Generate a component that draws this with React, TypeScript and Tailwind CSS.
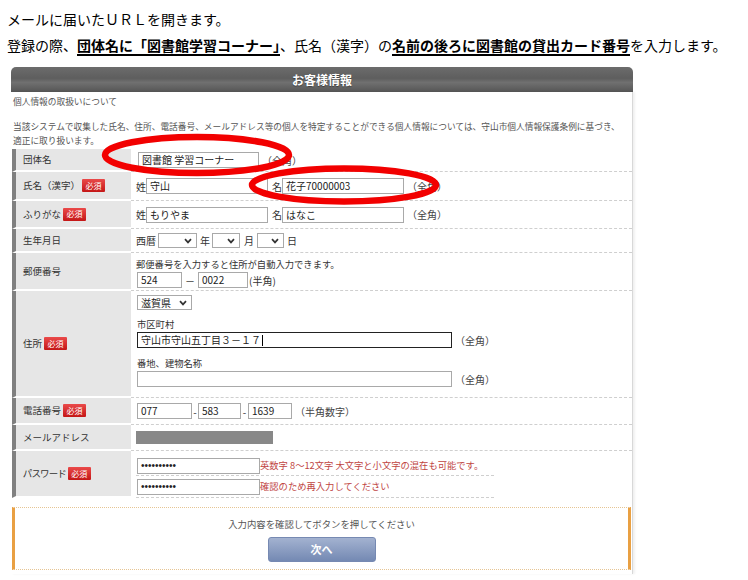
import React from 'react';

type Kids = { children?: React.ReactNode };

const Badge: React.FC = () => (
  <span className="ml-[2px] inline-flex h-[13px] w-[23px] items-center justify-center rounded-[1px] bg-[linear-gradient(#ea4a4a,#c41616)] text-[8px] leading-none text-white">
    必須
  </span>
);

const Field: React.FC<{ className?: string; value?: string; focus?: boolean }> = ({ className = '', value = '', focus }) => (
  <div
    className={`flex h-[16px] shrink-0 items-center bg-white px-[3px] text-[10px] leading-none text-[#222] ${
      focus ? 'border border-[#222]' : 'border border-[#a9a9a9]'
    } ${className}`}
  >
    {value}
    {focus && <span className="ml-[1px] h-[11px] w-px bg-black" />}
  </div>
);

const Select: React.FC<{ className?: string; value?: string }> = ({ className = '', value = '' }) => (
  <div className={`flex h-[15px] shrink-0 items-center justify-between border border-[#a9a9a9] bg-white pl-[3px] pr-[4px] text-[10px] leading-none text-[#222] ${className}`}>
    <span>{value}</span>
    <svg width="8" height="6" viewBox="0 0 8 6">
      <path d="M1 1.2 L4 4.4 L7 1.2" fill="none" stroke="#333" strokeWidth="1.7" />
    </svg>
  </div>
);

const Row: React.FC<Kids & { label: string; req?: boolean; h: string; last?: boolean; col?: boolean; narrow?: boolean }> = ({
  label,
  req,
  h,
  last,
  col,
  narrow,
  children,
}) => (
  <div className={`grid grid-cols-[119px_1fr] ${h}`}>
    <div
      className={`flex items-center border-b-2 border-l-4 border-b-white border-l-[#808080] bg-[#e6e6e6] pl-[7px] text-[9.5px] text-[#333] ${
        narrow ? "[font-feature-settings:'palt']" : ''
      }`}
    >
      {label}
      {req && <Badge />}
    </div>
    <div
      className={`flex pl-[5px] text-[10px] text-[#333] ${col ? 'flex-col items-start' : 'items-center'} ${
        last ? '' : 'border-b border-dashed border-[#cfcfcf]'
      }`}
    >
      {children}
    </div>
  </div>
);

const Zen: React.FC<{ className?: string }> = ({ className = '' }) => (
  <span className={`text-[10px] text-[#444] ${className}`}>（全角）</span>
);

export default function App() {
  return (
    <div className="relative h-[580px] w-[748px] overflow-hidden bg-white font-['Noto_Sans_CJK_JP','Noto_Sans',sans-serif] text-black">
      <div className="pl-[7px] pt-[6px] text-[14px] leading-[26px]">
        <p>メールに届いたＵＲＬを開きます。</p>
        <p className="whitespace-nowrap">
          登録の際、
          <b className="underline decoration-[1.5px] underline-offset-[3px]">団体名に「図書館学習コーナー」</b>
          、氏名（漢字）の
          <b className="underline decoration-[1.5px] underline-offset-[3px]">名前の後ろに図書館の貸出カード番号</b>
          を入力します。
        </p>
      </div>

      <div className="ml-[11px] mt-[9px] w-[622px]">
        <div className="flex h-[25px] items-center justify-center rounded-t-[5px] bg-[linear-gradient(#6c6c6c,#5e5e5e_45%,#707070_62%,#555)] text-[12px] font-bold text-white [text-shadow:0_1px_1px_rgba(0,0,0,0.4)]">
          お客様情報
        </div>

        <div className="border-r border-[#d8d8d8] pb-[4px] pl-[1px] shadow-[2px_0_2px_rgba(0,0,0,0.06)]">
          <div className="pb-[1px] pl-[1px] pt-[3px] text-[8.7px] leading-[14px] text-[#555]">
            <p>個人情報の取扱いについて</p>
            <p className="mt-[11px] whitespace-nowrap">
              当該システムで収集した氏名、住所、電話番号、メールアドレス等の個人を特定することができる個人情報については、守山市個人情報保護条例に基づき、
              <br />
              適正に取り扱います。
            </p>
          </div>

          <Row label="団体名" h="h-[23px]">
            <Field className="ml-[2px] w-[121px]" value="図書館 学習コーナー" />
            <Zen className="ml-[3px]" />
          </Row>

          <Row label="氏名（漢字）" req h="h-[29px]">
            <span>姓</span>
            <Field className="w-[122px]" value="守山" />
            <span className="ml-[4px]">名</span>
            <Field className="w-[122px]" value="花子70000003" />
            <Zen className="ml-[3px]" />
          </Row>

          <Row label="ふりがな" req h="h-[28px]">
            <span>姓</span>
            <Field className="w-[122px]" value="もりやま" />
            <span className="ml-[4px]">名</span>
            <Field className="w-[122px]" value="はなこ" />
            <Zen className="ml-[3px]" />
          </Row>

          <Row label="生年月日" h="h-[24px]">
            <span>西暦</span>
            <Select className="ml-[2px] w-[39px]" />
            <span className="ml-[3px]">年</span>
            <Select className="ml-[2px] w-[28px]" />
            <span className="ml-[4px]">月</span>
            <Select className="ml-[3px] w-[27px]" />
            <span className="ml-[3px]">日</span>
          </Row>

          <Row label="郵便番号" h="h-[38px]" col>
            <p className="mt-[5px] h-[13px] text-[9.3px] leading-[13px]">郵便番号を入力すると住所が自動入力できます。</p>
            <div className="mt-[1px] flex items-center">
              <Field className="ml-[1px] w-[45px]" value="524" />
              <span className="w-[16px] text-center">－</span>
              <Field className="w-[50px]" value="0022" />
              <span className="ml-[1px]">(半角)</span>
            </div>
          </Row>

          <Row label="住所" req h="h-[107px]" col>
            <Select className="ml-[1px] mt-[4px] h-[14px] w-[55px]" value="滋賀県" />
            <p className="ml-[1px] mt-[8px] h-[12px] text-[9.3px] leading-[12px]">市区町村</p>
            <div className="mt-[2px] flex items-center">
              <Field className="ml-[1px] w-[315px]" value="守山市守山五丁目３－１７" focus />
              <Zen className="ml-[3px]" />
            </div>
            <p className="ml-[1px] mt-[9px] h-[12px] text-[9.3px] leading-[12px]">番地、建物名称</p>
            <div className="mt-[2px] flex items-center">
              <Field className="ml-[1px] w-[315px]" />
              <Zen className="ml-[3px]" />
            </div>
          </Row>

          <Row label="電話番号" req h="h-[27px]" narrow>
            <Field className="ml-[1px] w-[55px]" value="077" />
            <span className="w-[6px] text-center">-</span>
            <Field className="w-[43px]" value="583" />
            <span className="w-[7px] text-center">-</span>
            <Field className="w-[44px]" value="1639" />
            <span className="ml-[3px] text-[#444]">（半角数字）</span>
          </Row>

          <Row label="メールアドレス" h="h-[26px]">
            <div className="h-[13px] w-[137px] bg-[#888]" />
          </Row>

          <Row label="パスワード" req h="h-[47px]" last col narrow>
            <div className="w-[358px] text-[9.3px] text-[#c0443f]">
              <div className="flex h-[25px] items-center border-b border-dashed border-[#cfcfcf] pt-[5px]">
                <Field className="ml-[1px] h-[15px] w-[123px] font-['Liberation_Sans',sans-serif] text-[7px]" value="••••••••••" />
                <span>英数字 8～12文字 大文字と小文字の混在も可能です。</span>
              </div>
              <div className="flex h-[22px] items-center border-b border-dashed border-[#cfcfcf]">
                <Field className="ml-[1px] h-[15px] w-[123px] font-['Liberation_Sans',sans-serif] text-[7px]" value="••••••••••" />
                <span>確認のため再入力してください</span>
              </div>
            </div>
          </Row>

          <div className="mr-[1px] mt-[9px] flex h-[63px] flex-col items-center border-x-[3px] border-y border-dotted border-x-[#e9a043] border-y-[#e6c594] [border-left-style:solid] [border-right-style:solid]">
            <p className="mt-[9px] text-[9.4px] leading-[14px] text-[#555]">入力内容を確認してボタンを押してください</p>
            <button className="mt-[6px] flex h-[25px] w-[108px] items-center justify-center rounded-[3px] border border-[#7689b2] bg-[linear-gradient(#a3b2d0,#7489b3)] text-[11px] font-bold text-white">
              次へ
            </button>
          </div>
        </div>
      </div>

      <svg className="pointer-events-none absolute left-0 top-0" width="748" height="580">
        <ellipse cx="197" cy="155" rx="92" ry="18" fill="none" stroke="#f20000" strokeWidth="6.5" />
        <ellipse cx="344" cy="185" rx="92" ry="16.5" fill="none" stroke="#f20000" strokeWidth="6.5" />
      </svg>
    </div>
  );
}
